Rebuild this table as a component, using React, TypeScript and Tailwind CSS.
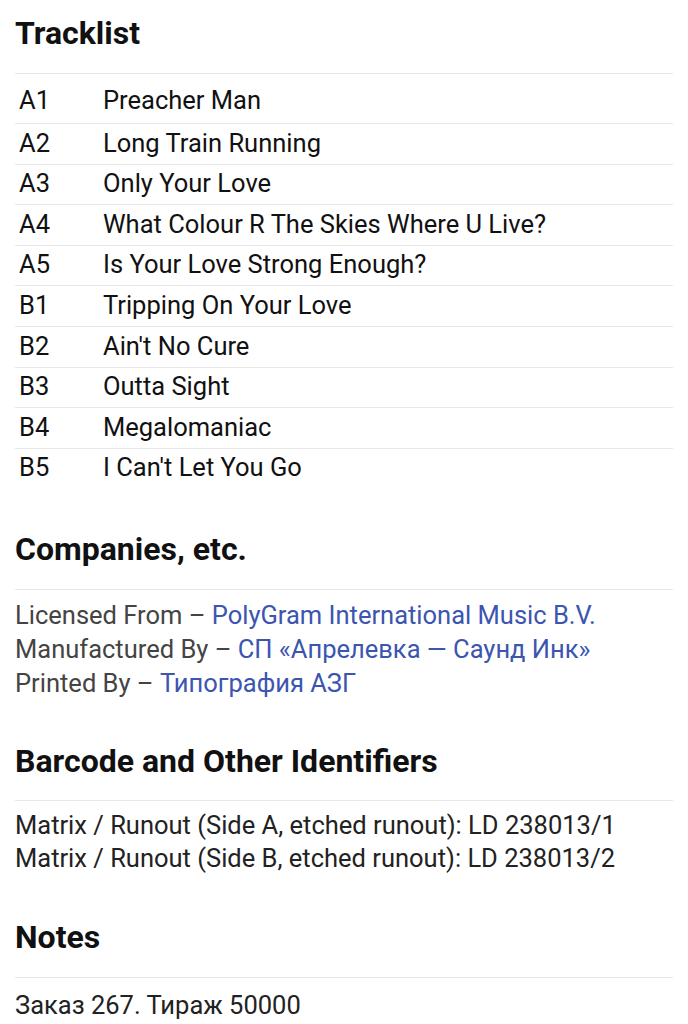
const tracks = [
  ["A1", "Preacher Man"],
  ["A2", "Long Train Running"],
  ["A3", "Only Your Love"],
  ["A4", "What Colour R The Skies Where U Live?"],
  ["A5", "Is Your Love Strong Enough?"],
  ["B1", "Tripping On Your Love"],
  ["B2", "Ain't No Cure"],
  ["B3", "Outta Sight"],
  ["B4", "Megalomaniac"],
  ["B5", "I Can't Let You Go"],
];

const companies = [
  ["Licensed From", "PolyGram International Music B.V."],
  ["Manufactured By", "СП «Апрелевка — Саунд Инк»"],
  ["Printed By", "Типография АЗГ"],
];

function Heading({ children }: { children: React.ReactNode }) {
  return (
    <h2 className="text-[32px] font-bold leading-[36px] text-[#111]">
      {children}
    </h2>
  );
}

export default function App() {
  return (
    <div
      className="bg-white w-[688px] h-[1024px] overflow-hidden px-[15px] pt-[15px]"
      style={{ fontFamily: "Roboto, 'Noto Sans', sans-serif" }}
    >
      <Heading>Tracklist</Heading>
      <div className="mt-[22px] border-t border-[#e8e8e8]">
        {tracks.map(([pos, title], i) => (
          <div
            key={pos}
            className={
              i === 0
                ? "flex items-center h-[49px] pt-[3px] text-[25.5px] text-[#111]"
                : "flex items-center h-[40.6px] pb-[2px] border-t border-[#e8e8e8] text-[25.5px] text-[#111]"
            }
          >
            <span className="w-[88px] pl-[4px]">{pos}</span>
            <span>{title}</span>
          </div>
        ))}
      </div>

      <div className="mt-[43px]">
        <Heading>Companies, etc.</Heading>
      </div>
      <div className="mt-[22px] border-t border-[#e8e8e8] pt-[8px] text-[25.5px] leading-[34px]">
        {companies.map(([role, name]) => (
          <div key={role} className="text-[#444]">
            {role} – <span className="text-[#3b55b0]">{name}</span>
          </div>
        ))}
      </div>

      <div className="mt-[43px]">
        <Heading>Barcode and Other Identifiers</Heading>
      </div>
      <div className="mt-[21px] border-t border-[#e8e8e8] pt-[8px] text-[25.5px] leading-[33px] text-[#222]">
        <div>Matrix / Runout (Side A, etched runout): LD 238013/1</div>
        <div>Matrix / Runout (Side B, etched runout): LD 238013/2</div>
      </div>

      <div className="mt-[44px]">
        <Heading>Notes</Heading>
      </div>
      <div className="mt-[22px] border-t border-[#e8e8e8] pt-[11px] text-[25.5px] leading-[33px] text-[#222]">
        Заказ 267. Тираж 50000
      </div>
    </div>
  );
}
